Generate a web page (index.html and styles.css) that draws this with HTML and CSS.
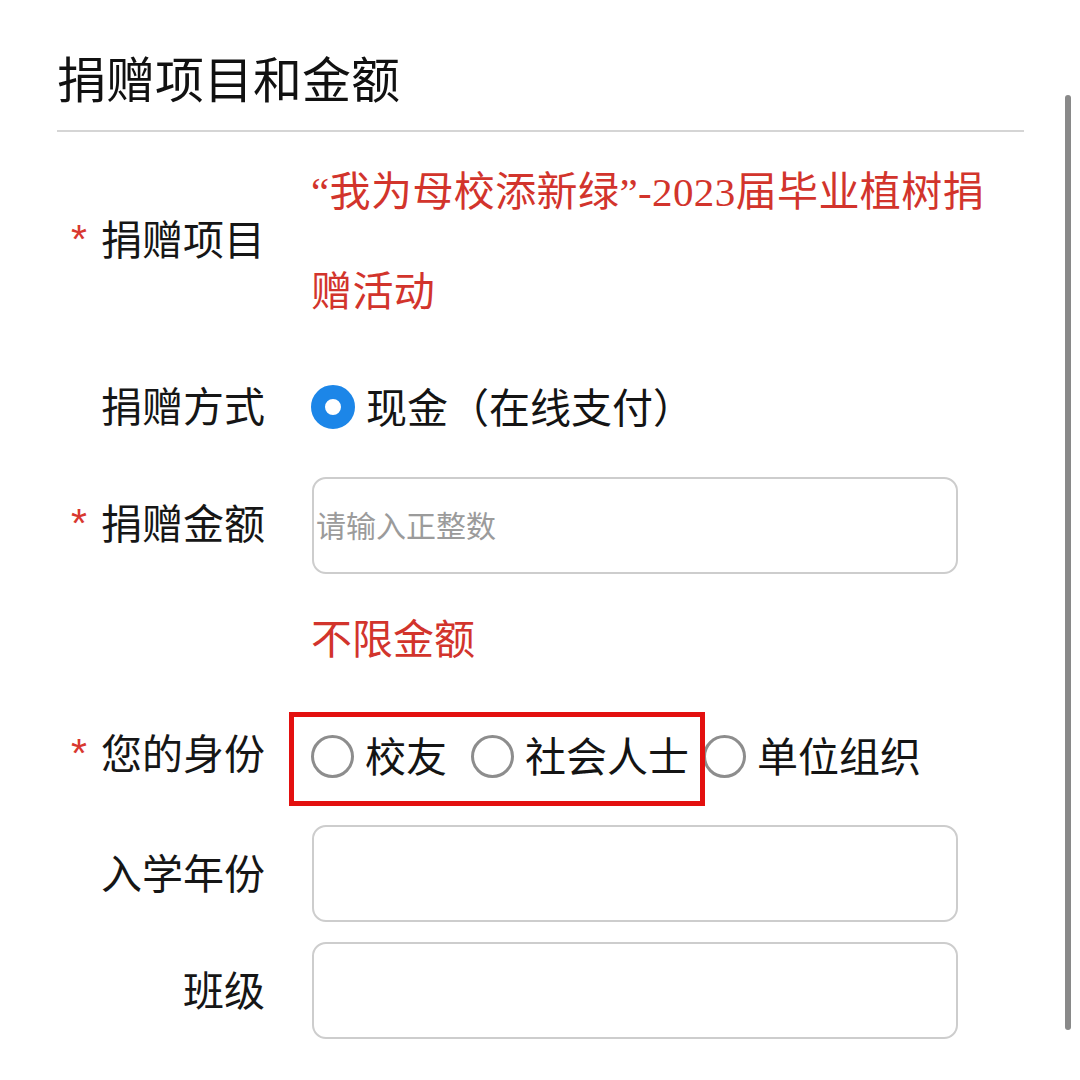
FILE: index.html
```html
<!DOCTYPE html>
<html lang="zh-CN">
<head>
<meta charset="utf-8">
<title>捐赠项目和金额</title>
<link rel="stylesheet" href="styles.css">
</head>
<body>
<div class="page">
  <header class="head"><h1 class="title">捐赠项目和金额</h1></header>
  <div class="form">
    <div class="row row-project">
      <div class="label"><span class="req">*</span>捐赠项目</div>
      <div class="value project">“我为母校添新绿”-2023届毕业植树捐赠活动</div>
    </div>
    <div class="row row-method">
      <div class="label">捐赠方式</div>
      <div class="value options">
        <span class="opt"><span class="radio checked"></span><span class="opt-text">现金（在线支付）</span></span>
      </div>
    </div>
    <div class="row row-amount">
      <div class="label"><span class="req">*</span>捐赠金额</div>
      <div class="value"><input class="field" type="text" placeholder="请输入正整数"></div>
    </div>
    <div class="row row-hint">
      <div class="label"></div>
      <div class="value hint">不限金额</div>
    </div>
    <div class="row row-identity">
      <div class="label"><span class="req">*</span>您的身份</div>
      <div class="value options identity">
        <span class="opt opt-wide"><span class="radio"></span><span class="opt-text">校友</span></span>
        <span class="opt"><span class="radio"></span><span class="opt-text">社会人士</span></span>
        <span class="opt"><span class="radio"></span><span class="opt-text">单位组织</span></span>
        <span class="mark"></span>
      </div>
    </div>
    <div class="row row-year">
      <div class="label">入学年份</div>
      <div class="value"><input class="field" type="text"></div>
    </div>
    <div class="row row-class">
      <div class="label">班级</div>
      <div class="value"><input class="field" type="text"></div>
    </div>
  </div>
  <div class="scrollbar"></div>
</div>
</body>
</html>
```

FILE: styles.css
```css
html, body {
  margin: 0;
  padding: 0;
  background: #ffffff;
}

body {
  font-family: "Noto Sans CJK SC", "Noto Sans", sans-serif;
  color: #141414;
}

.page {
  position: relative;
  width: 1080px;
  height: 1080px;
  overflow: hidden;
  padding-left: 57px;
  box-sizing: border-box;
}

.head {
  margin-right: 56px;
  border-bottom: 2px solid #d5d5d5;
  padding: 37px 0 13px;
}

.title {
  margin: 0;
  font-size: 49px;
  line-height: 80px;
  font-weight: 400;
  color: #111;
}

.row {
  display: grid;
  grid-template-columns: 208px 690px;
  column-gap: 46px;
  align-items: center;
}

.label {
  text-align: right;
  font-size: 41px;
  line-height: 60px;
  padding-bottom: 6px;
  color: #161616;
  white-space: nowrap;
}

.req {
  font-family: "Liberation Sans", sans-serif;
  color: #d8382f;
  margin-right: 14px;
  position: relative;
  top: -2px;
}

.value {
  font-size: 41px;
}

.project {
  font-family: "Liberation Serif", "Noto Sans CJK SC", serif;
  line-height: 100px;
  letter-spacing: 0.4px;
  color: #d2342c;
}

.row-project {
  margin-top: 10px;
}

.row-method {
  height: 130px;
}

.options {
  display: flex;
  align-items: center;
}

.opt {
  display: inline-flex;
  align-items: center;
  margin-right: 14px;
}

.opt-wide {
  margin-right: 24px;
}

.opt-text {
  line-height: 60px;
  padding-bottom: 5px;
  color: #141414;
}

.radio {
  box-sizing: border-box;
  width: 43px;
  height: 43px;
  border-radius: 50%;
  border: 3px solid #8d8d8d;
  margin-right: 11px;
  flex: none;
}

.radio.checked {
  width: 44px;
  height: 44px;
  border: 14px solid #1c86e8;
  background: #fff;
}

.row-amount {
  padding-top: 5px;
}

.field {
  display: block;
  box-sizing: border-box;
  width: 646px;
  height: 97px;
  margin: 0 0 0 1px;
  padding: 0 2px 4px;
  border: 2px solid #cdcdcd;
  border-radius: 14px;
  background: #fff;
  font-family: "Noto Sans CJK SC", sans-serif;
  font-size: 30px;
  color: #141414;
  outline: none;
}

.field::placeholder {
  color: #9b9b9b;
}

.row-hint {
  height: 130px;
}

.hint {
  color: #d2342c;
  line-height: 60px;
  padding-bottom: 6px;
}

.row-identity {
  height: 104px;
}

.identity {
  position: relative;
  align-self: stretch;
}

.mark {
  position: absolute;
  left: -22px;
  top: 8px;
  width: 416px;
  height: 94px;
  box-sizing: border-box;
  border: 5px solid #e3100f;
}

.row-year {
  padding-top: 17px;
}

.row-class {
  padding-top: 20px;
}

.scrollbar {
  position: absolute;
  left: 1065px;
  top: 95px;
  width: 6px;
  height: 935px;
  border-radius: 3px;
  background: #898989;
}
```
